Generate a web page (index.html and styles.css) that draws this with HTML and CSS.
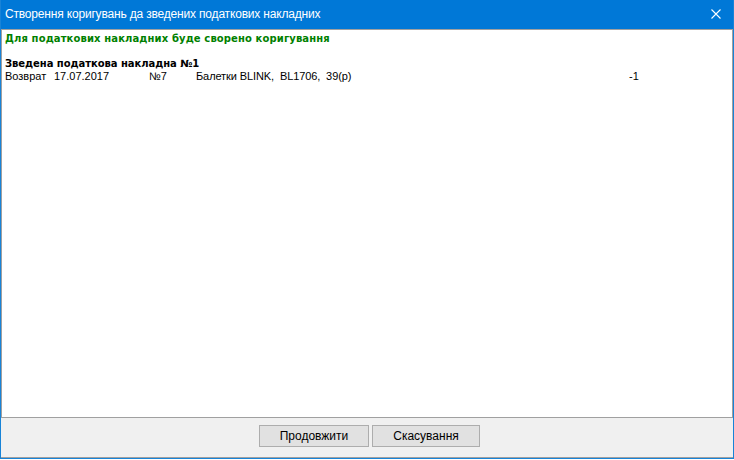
FILE: index.html
```html
<!DOCTYPE html>
<html lang="uk">

<head>
    <meta charset="UTF-8" />
    <title>Створення коригувань</title>
    <link rel="stylesheet" href="styles.css">
</head>

<body>

    <div class="window">
        <div class="title-bar">
            <span class="title-text">Створення коригувань да зведених податкових накладних</span>
            <button class="close-btn" aria-label="Закрити">
                <svg width="10" height="10" viewBox="0 0 10 10">
                    <path d="M0.5 0.5 L9.5 9.5 M9.5 0.5 L0.5 9.5" stroke="#fff" stroke-width="1.1" fill="none" />
                </svg>
            </button>
        </div>

        <div class="content">
            <div class="notice">Для податкових накладних буде сворено коригування</div>

            <!-- одна накладна -->
            <div class="invoice">
                <div class="invoice-title">Зведена податкова накладна №1</div>
                <div class="invoice-row">
                    <span class="col-type">Возврат</span>
                    <span class="col-date">17.07.2017</span>
                    <span class="col-num">№7</span>
                    <span class="col-goods">Балетки BLINK,&nbsp; BL1706,&nbsp; 39(р)</span>
                    <span class="col-qty">-1</span>
                </div>
            </div>
            <!--// одна накладна -->
        </div>

        <div class="footer">
            <button class="btn btn-ok">Продовжити</button>
            <button class="btn btn-cancel">Скасування</button>
        </div>
    </div>

</body>

</html>
```

FILE: styles.css
```css
* {
    box-sizing: border-box;
}

body {
    margin: 0;
    background: #fff;
    font-family: "Liberation Sans", sans-serif;
}

.window {
    display: flex;
    flex-direction: column;
    width: 734px;
    height: 459px;
    border: 1px solid #1883d7;
    border-top: none;
    background: #f0f0f0;
}

.title-bar {
    display: flex;
    align-items: center;
    justify-content: space-between;
    height: 29px;
    padding: 0 0 0 4px;
    background: #0078d7;
    color: #fff;
}

.title-text {
    font-size: 12px;
    letter-spacing: -0.18px;
    padding-bottom: 1px;
}

.close-btn {
    display: flex;
    align-items: center;
    justify-content: center;
    width: 30px;
    height: 29px;
    margin-right: 2px;
    padding: 0 0 1px 0;
    border: none;
    background: transparent;
}

.content {
    flex: 1;
    padding: 2px 3px;
    background: #fff;
    border: 1px solid #a0a0a0;
    font-size: 11px;
    color: #000;
}

.notice {
    font-family: "DejaVu Sans", sans-serif;
    font-size: 10px;
    font-weight: bold;
    letter-spacing: 0.12px;
    line-height: 13px;
    color: #008000;
}

.invoice {
    margin-top: 13px;
}

.invoice-title {
    font-family: "DejaVu Sans", sans-serif;
    font-size: 10px;
    font-weight: bold;
    letter-spacing: -0.05px;
    line-height: 12px;
}

.invoice-row {
    display: flex;
    line-height: 12px;
    white-space: nowrap;
}

.col-type {
    width: 49px;
}

.col-date {
    width: 95px;
}

.col-num {
    width: 47px;
}

.col-goods {
    width: 433px;
    letter-spacing: -0.1px;
}

.footer {
    display: flex;
    justify-content: center;
    gap: 3px;
    height: 40px;
    padding: 7px 0 0 5px;
    border-bottom: 1px solid #a0a0a0;
}

.btn {
    width: 110px;
    height: 22px;
    padding: 0;
    border: 1px solid #adadad;
    background: #e1e1e1;
    font-family: "Liberation Sans", sans-serif;
    font-size: 12px;
    color: #000;
}

.btn-cancel {
    width: 108px;
}
```
